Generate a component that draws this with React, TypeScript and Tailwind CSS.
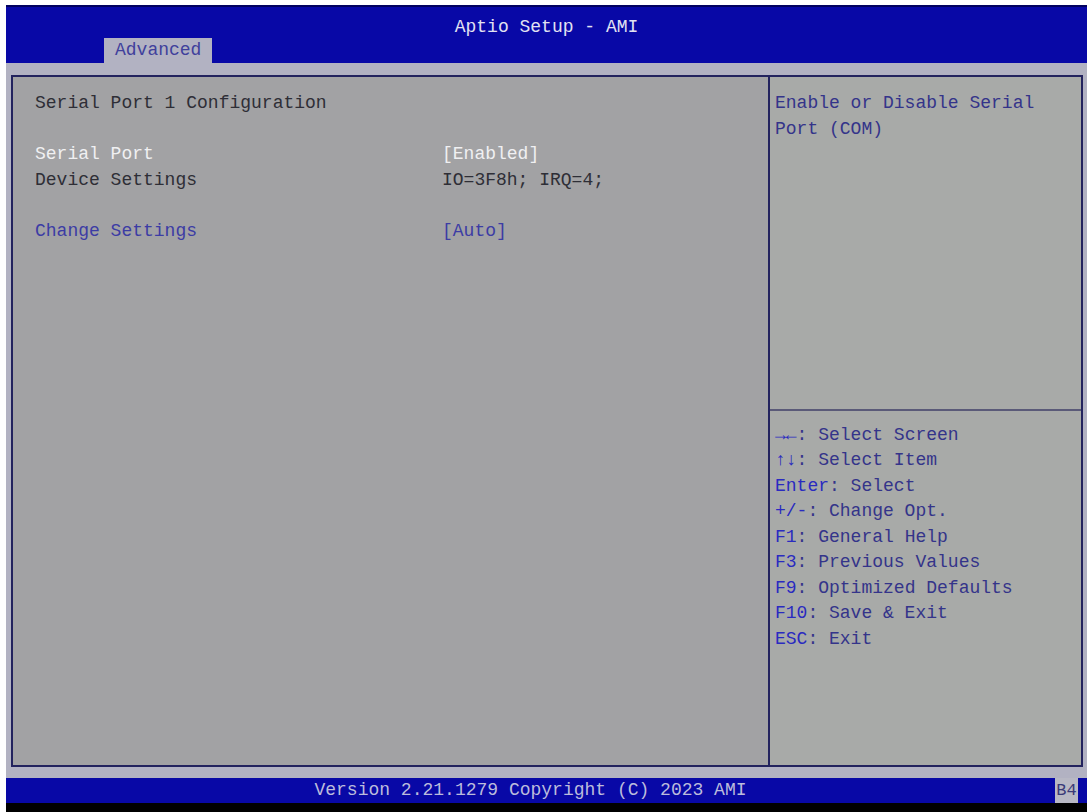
const rows: { label?: string; value?: string; tone?: "dark" | "white" | "blue" }[] = [
  { label: "Serial Port 1 Configuration", tone: "dark" },
  {},
  { label: "Serial Port", value: "[Enabled]", tone: "white" },
  { label: "Device Settings", value: "IO=3F8h; IRQ=4;", tone: "dark" },
  {},
  { label: "Change Settings", value: "[Auto]", tone: "blue" },
];

const keys: [string, string][] = [
  ["→←", ": Select Screen"],
  ["↑↓", ": Select Item"],
  ["Enter", ": Select"],
  ["+/-", ": Change Opt."],
  ["F1", ": General Help"],
  ["F3", ": Previous Values"],
  ["F9", ": Optimized Defaults"],
  ["F10", ": Save & Exit"],
  ["ESC", ": Exit"],
];

const toneClass = {
  dark: "text-[#2e2e36]",
  white: "text-[#f0f0f2]",
  blue: "text-[#3c3ca4]",
};

const App = () => {
  return (
    <div className="w-[1087px] h-[812px] overflow-hidden bg-white pl-[6px] pt-[5px] flex flex-col font-['Liberation_Mono','DejaVu_Sans_Mono',monospace] text-[18px] whitespace-pre">
      {/* Title bar */}
      <div className="h-[58px] shrink-0 bg-[#0808a6] border-t-2 border-[#020260] flex flex-col">
        <div className="h-[31px] pt-[9px] leading-[22px] text-center text-[#e2e2f2]">
          Aptio Setup - AMI
        </div>
        <div className="h-[25px] pl-[98px] flex">
          <div className="h-full px-[11px] bg-[#b2b2c2] leading-[25px] text-[#40409c]">
            Advanced
          </div>
        </div>
      </div>

      {/* Body */}
      <div className="flex-1 bg-[#b2b2c2] pt-[12px] pl-[5px] pr-[4px] pb-[11px] flex">
        <div className="flex-1 flex border-2 border-[#23235e]">
          {/* Main panel */}
          <div className="w-[755px] shrink-0 bg-[#a2a2a4] pt-[14px] pl-[22px] leading-[25.5px]">
            {rows.map((r, i) => (
              <div key={i} className={`h-[25.5px] flex ${r.tone ? toneClass[r.tone] : ""}`}>
                <span className="w-[407px] shrink-0">{r.label ?? ""}</span>
                <span>{r.value ?? ""}</span>
              </div>
            ))}
          </div>

          {/* Help panel */}
          <div className="flex-1 border-l-2 border-[#23235e] bg-[#a8aaa8] pt-[14px] leading-[25.5px] text-[#34348a]">
            <div className="h-[25.5px] pl-[5px]">Enable or Disable Serial</div>
            <div className="h-[25.5px] pl-[5px]">Port (COM)</div>
            <div className="h-[255px]" />
            <div className="h-[25.5px] flex items-center">
              <div className="w-full h-[2px] bg-[#5a5a78]" />
            </div>
            {keys.map(([k, d]) => (
              <div key={k} className="h-[25.5px] pl-[5px]">
                <span className={k.length === 2 && !k.startsWith("F") ? "text-[#2a2ac0] font-bold" : "text-[#2a2ac0]"}>{k}</span>
                <span>{d}</span>
              </div>
            ))}
          </div>
        </div>
      </div>

      {/* Footer */}
      <div className="h-[25px] shrink-0 flex bg-[#0808a6]">
        <div className="flex-1 text-center leading-[25px] text-[#bcbcdc]">
          Version 2.21.1279 Copyright (C) 2023 AMI
        </div>
        <div className="w-[23px] bg-[#b8b8c4] leading-[25px] text-[#3a3a78] text-[17px] text-center">
          B4
        </div>
        <div className="w-[9px]" />
      </div>
      <div className="h-[9px] shrink-0 bg-black" />
    </div>
  );
};

export default App;
